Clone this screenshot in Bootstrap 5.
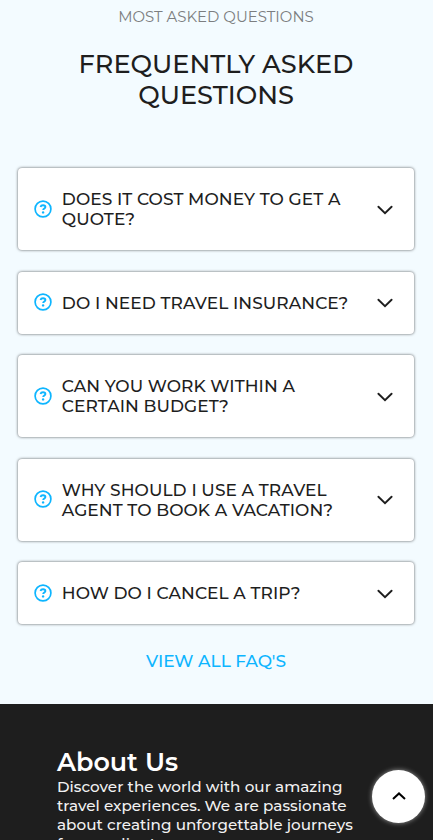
<!DOCTYPE html>
<html lang="en">
<head>
<meta charset="utf-8">
<meta name="viewport" content="width=device-width, initial-scale=1">
<title>Frequently Asked Questions</title>
<link href="https://cdn.jsdelivr.net/npm/bootstrap@5.3.0/dist/css/bootstrap.min.css" rel="stylesheet">
<script src="https://cdn.jsdelivr.net/npm/bootstrap@5.3.0/dist/js/bootstrap.bundle.min.js" defer></script>
<style>
html,body{height:840px;overflow:hidden}
body{font-family:Montserrat,Inter,sans-serif;background:#f3fbff;color:#1e1e1e}
.faq-section{height:704px;padding:7px 19px 0 18px}
.eyebrow{font-size:14.95px;line-height:20px;color:#7c7e80;margin-bottom:21px}
.faq-title{font-size:25.6px;line-height:31px;font-weight:500;margin-bottom:58px}
.faq-list{gap:21.5px}
.faq-item{border:0;border-radius:4px;box-shadow:0 0 3px rgba(0,0,0,.65);padding:21px 21.5px 21px 15.5px}
.faq-icon{width:18px;height:18px;color:#0db5ff;margin-bottom:.6px}
.faq-text{font-size:17px;line-height:20px;font-weight:500;letter-spacing:.07px;margin-left:10.3px;white-space:nowrap}
.faq-arrow{width:16px;height:10px;margin-top:1.4px}
.more-link{font-size:17px;line-height:20px;font-weight:500;color:#0db5ff;margin-top:27px}
.site-footer{background:#1e1e1e;height:136px;padding:43px 0 0 57px;color:#fff;overflow:hidden}
.about-title{font-size:25.4px;line-height:30px;font-weight:600}
.about-text{font-size:15.2px;line-height:19px;font-weight:500;letter-spacing:.04px;color:#f2f2f2;white-space:nowrap}
.to-top{right:8px;bottom:17px;width:53px;height:53px;background:#fff;box-shadow:0 0 5px rgba(255,255,255,.55)}
</style>
</head>
<body>
<svg class="d-none" aria-hidden="true">
<symbol id="question" viewBox="0 0 18 18"><circle cx="9" cy="9" r="7.9" fill="none" stroke="currentColor" stroke-width="1.7"/><path d="M6.5 6.9C6.8 5.7 7.6 5.2 9 5.2c1.5 0 2.4.7 2.4 1.8C11.4 8.5 9.2 8.5 9.2 10" fill="none" stroke="currentColor" stroke-width="1.9"/><circle cx="9.1" cy="12.4" r="1.2" fill="currentColor"/></symbol>
<symbol id="down" viewBox="0 0 16 10"><path d="M1.4 1.7 8 8.2l6.6-6.5" fill="none" stroke="currentColor" stroke-width="1.9" stroke-linecap="round"/></symbol>
</svg>
<section class="faq-section d-flex flex-column">
<p class="eyebrow text-center">MOST ASKED QUESTIONS</p>
<h2 class="faq-title text-center">FREQUENTLY ASKED<br>QUESTIONS</h2>
<div class="faq-list d-flex flex-column">
<div class="faq-item card flex-row align-items-center"><svg class="faq-icon"><use href="#question"/></svg><div class="faq-text">DOES IT COST MONEY TO GET A<br>QUOTE?</div><svg class="faq-arrow ms-auto"><use href="#down"/></svg></div>
<div class="faq-item card flex-row align-items-center"><svg class="faq-icon"><use href="#question"/></svg><div class="faq-text">DO I NEED TRAVEL INSURANCE?</div><svg class="faq-arrow ms-auto"><use href="#down"/></svg></div>
<div class="faq-item card flex-row align-items-center"><svg class="faq-icon"><use href="#question"/></svg><div class="faq-text">CAN YOU WORK WITHIN A<br>CERTAIN BUDGET?</div><svg class="faq-arrow ms-auto"><use href="#down"/></svg></div>
<div class="faq-item card flex-row align-items-center"><svg class="faq-icon"><use href="#question"/></svg><div class="faq-text">WHY SHOULD I USE A TRAVEL<br>AGENT TO BOOK A VACATION?</div><svg class="faq-arrow ms-auto"><use href="#down"/></svg></div>
<div class="faq-item card flex-row align-items-center"><svg class="faq-icon"><use href="#question"/></svg><div class="faq-text">HOW DO I CANCEL A TRIP?</div><svg class="faq-arrow ms-auto"><use href="#down"/></svg></div>
</div>
<a href="#" class="more-link text-decoration-none align-self-center">VIEW ALL FAQ'S</a>
</section>
<footer class="site-footer">
<h3 class="about-title mb-0">About Us</h3>
<p class="about-text mb-0">Discover the world with our amazing<br>travel experiences. We are passionate<br>about creating unforgettable journeys<br>for our clients.</p>
</footer>
<a href="#" class="to-top position-fixed rounded-circle d-flex align-items-center justify-content-center text-black" aria-label="Back to top"><svg width="14" height="9" viewBox="0 0 14 9"><path d="M1 7 7 1.4 13 7" fill="none" stroke="currentColor" stroke-width="2"/></svg></a>
</body>
</html>
